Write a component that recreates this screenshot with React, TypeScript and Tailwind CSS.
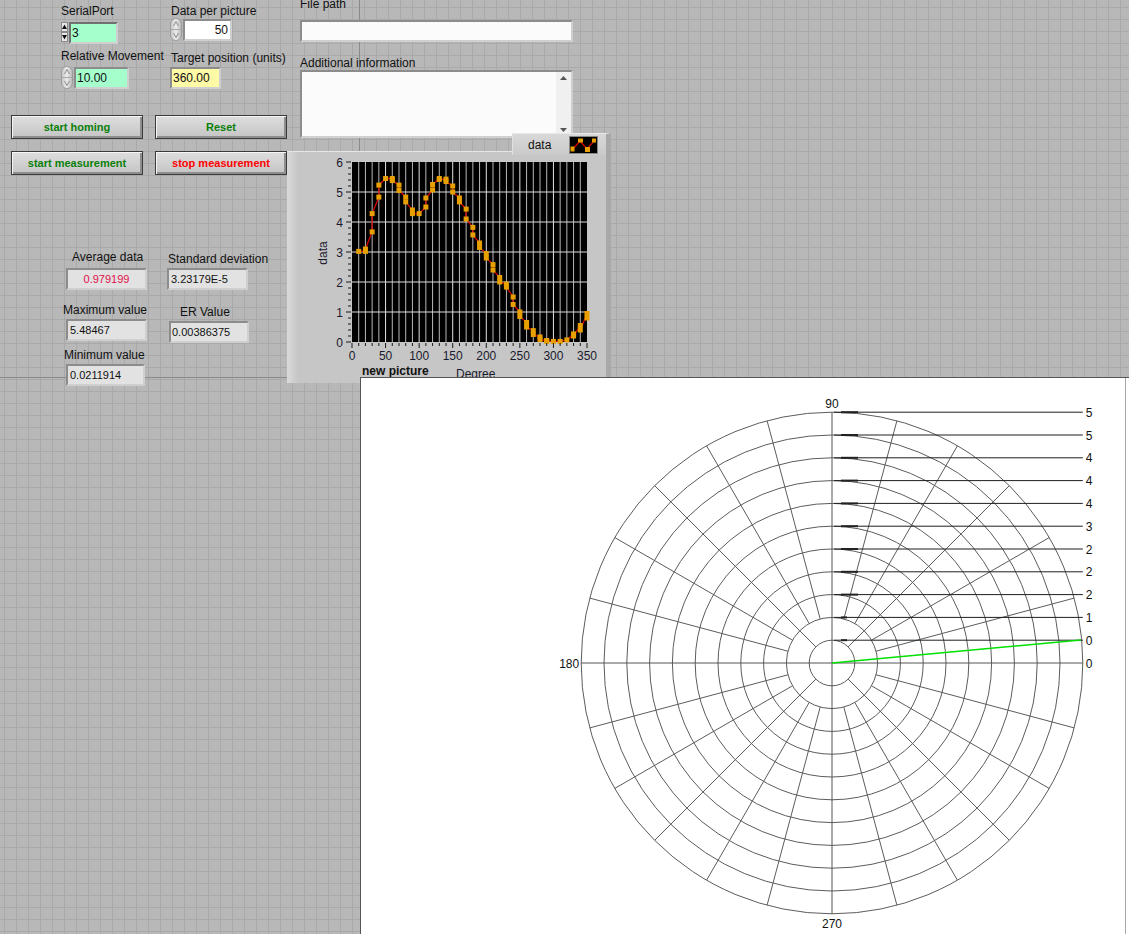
import React from "react";

const pts: [number, number[]][] = [
  [10, [3.02]], [20, [3.02, 3.1]], [30, [3.67, 4.28]], [40, [4.83, 5.23]], [50, [5.45]],
  [60, [5.45, 5.38]], [70, [5.23, 5.05]], [80, [4.83, 4.67]], [90, [4.4, 4.28]], [100, [4.28]],
  [110, [4.5, 4.8]], [120, [5.07, 5.25]], [130, [5.45, 5.42]], [140, [5.43, 5.35]], [150, [5.2, 5.0]],
  [160, [4.8, 4.67]], [170, [4.43, 4.1]], [180, [3.82, 3.57]], [190, [3.3, 3.15]], [200, [2.95, 2.8]],
  [210, [2.58, 2.4]], [220, [2.15, 2.0]], [230, [1.93, 1.83]], [240, [1.5, 1.25]], [250, [1.0, 0.85]],
  [260, [0.65, 0.5]], [270, [0.38, 0.25]], [280, [0.17, 0.08]], [290, [0.05, 0.02]], [300, [0.02]],
  [310, [0.02]], [320, [0.07]], [330, [0.27, 0.2]], [340, [0.55, 0.4]], [350, [0.95, 0.8]],
];

const FONT = "Liberation Sans, Arial, sans-serif";

function XYChart() {
  const px = (d: number) => 65 + (d * 235) / 350;
  const py = (v: number) => 190 - v * 30;
  const flat: [number, number][] = [];
  pts.forEach(([d, ys]) => ys.forEach((v) => flat.push([px(d), py(v)])));
  const path = flat.map(([x, y], i) => `${i ? "L" : "M"}${x.toFixed(1)} ${y.toFixed(1)}`).join(" ");
  const vgrid: number[] = [];
  for (let d = 10; d < 350; d += 10) vgrid.push(d);
  const yMinor: number[] = [];
  for (let i = 0; i <= 30; i++) yMinor.push(i / 5);
  const xMinor: number[] = [];
  for (let d = 0; d <= 350; d += 10) xMinor.push(d);
  return (
    <svg width="319" height="232" className="block" fontFamily={FONT}>
      <rect x="65" y="10" width="235" height="180" fill="#000" />
      {vgrid.map((d) => (
        <line key={d} x1={px(d)} x2={px(d)} y1="10" y2="190" stroke={d % 50 === 0 ? "#e4e4e4" : "#b8b8b8"} strokeWidth="1" />
      ))}
      {[1, 2, 3, 4, 5].map((v) => (
        <line key={v} x1="65" x2="300" y1={py(v)} y2={py(v)} stroke="#dcdcdc" strokeWidth="1" />
      ))}
      <path d={path} stroke="#d40000" strokeWidth="1.3" fill="none" />
      {flat.map(([x, y], i) => (
        <rect key={i} x={x - 2.5} y={y - 2.5} width="5" height="5" fill="#e8a000" />
      ))}
      {yMinor.map((v, i) => (
        <line key={i} x1={i % 5 === 0 ? 59 : 61} x2="64" y1={py(v)} y2={py(v)} stroke="#1a1a1a" strokeWidth="1" />
      ))}
      {[0, 1, 2, 3, 4, 5, 6].map((v) => (
        <text key={v} x="56" y={py(v) + 4.5} fontSize="12" textAnchor="end" fill="#1a1a2e">{v}</text>
      ))}
      {xMinor.map((d) => (
        <line key={d} x1={px(d)} x2={px(d)} y1="191" y2={d % 50 === 0 ? 196 : 194} stroke="#1a1a1a" strokeWidth="1" />
      ))}
      {[0, 50, 100, 150, 200, 250, 300, 350].map((d) => (
        <text key={d} x={px(d)} y="208" fontSize="12" textAnchor="middle" fill="#1a1a2e">{d}</text>
      ))}
      <text x="40" y="101" fontSize="12" textAnchor="middle" fill="#1a1a2e" transform="rotate(-90 40 101)">data</text>
      <text x="75" y="223" fontSize="12" fontWeight="bold" fill="#111">new picture</text>
      <text x="169" y="226" fontSize="12" fill="#1a1a2e">Degree</text>
    </svg>
  );
}

function PolarPlot() {
  const cx = 471;
  const cy = 285;
  const step = 22.8;
  const R = step * 11;
  const rings = Array.from({ length: 11 }, (_, i) => (i + 1) * step);
  const spokes: number[] = [];
  for (let a = 15; a < 360; a += 15) if (a % 90 !== 0) spokes.push(a);
  const labels = [0, 0, 1, 2, 2, 2, 3, 4, 4, 4, 5, 5];
  return (
    <svg width="768" height="556" className="block" fontFamily={FONT}>
      {rings.map((r, i) => (
        <circle key={i} cx={cx} cy={cy} r={r} fill="none" stroke="#5c5c5c" strokeWidth="1" />
      ))}
      {spokes.map((a) => {
        const r0 = a % 45 === 0 ? step : 2 * step;
        const rad = (a * Math.PI) / 180;
        return (
          <line key={a} x1={cx + r0 * Math.cos(rad)} y1={cy - r0 * Math.sin(rad)} x2={cx + R * Math.cos(rad)} y2={cy - R * Math.sin(rad)} stroke="#5c5c5c" strokeWidth="1" />
        );
      })}
      <line x1={cx - R} x2={cx + R} y1={cy} y2={cy} stroke="#555" strokeWidth="1" />
      <line x1={cx} x2={cx} y1={cy - R} y2={cy + R} stroke="#555" strokeWidth="1" />
      {labels.map((l, k) => (
        <g key={k}>
          {k > 0 && <line x1={cx + 2} x2={cx + R} y1={cy - k * step} y2={cy - k * step} stroke="#1e1e1e" strokeWidth="1" />}
          {k > 0 && <line x1={cx + 9} x2={cx + (k > 2 ? 26 : 15)} y1={cy - k * step} y2={cy - k * step} stroke="#222" strokeWidth="2" />}
          <text x={cx + R + 3} y={cy - k * step + 4.5} fontSize="12" fill="#111">{l}</text>
        </g>
      ))}
      <line x1={cx} y1={cy} x2={cx + 249} y2={cy - 23} stroke="#00e000" strokeWidth="1.5" />
      <text x={cx} y={cy - R - 4} fontSize="12" textAnchor="middle" fill="#111">90</text>
      <text x={cx - R - 2} y={cy + 4.5} fontSize="12" textAnchor="end" fill="#111">180</text>
      <text x={cx} y={cy + R + 14} fontSize="12" textAnchor="middle" fill="#111">270</text>
      <line x1="764.5" x2="764.5" y1="0" y2="556" stroke="#a8a8a8" strokeWidth="1" />
    </svg>
  );
}

function UpDown() {
  return (
    <svg width="7" height="20" viewBox="0 0 7 20">
      <rect x="0" y="0" width="7" height="20" fill="#d8d8d8" />
      <rect x="0.5" y="0.5" width="6" height="9" fill="#e8e8e8" stroke="#8a8a8a" />
      <rect x="0.5" y="10.5" width="6" height="9" fill="#e8e8e8" stroke="#8a8a8a" />
      <polygon points="3.5,2.5 6,7 1,7" fill="#111" />
      <polygon points="3.5,17.5 6,13 1,13" fill="#111" />
    </svg>
  );
}

function Pill() {
  return (
    <svg width="12" height="23" viewBox="0 0 12 23" className="shrink-0">
      <defs>
        <linearGradient id="pg" x1="0" x2="1" y1="0" y2="0">
          <stop offset="0" stopColor="#c4c4c4" />
          <stop offset="0.5" stopColor="#ececec" />
          <stop offset="1" stopColor="#b4b4b4" />
        </linearGradient>
      </defs>
      <rect x="0.5" y="0.5" width="11" height="22" rx="5.5" fill="url(#pg)" stroke="#9c9c9c" />
      <line x1="1" x2="11" y1="11.5" y2="11.5" stroke="#a8a8a8" />
      <polyline points="3.5,8 6,3.5 8.5,8" fill="none" stroke="#8c8c8c" strokeWidth="1" />
      <polyline points="3.5,15 6,19.5 8.5,15" fill="none" stroke="#8c8c8c" strokeWidth="1" />
    </svg>
  );
}

const btn =
  "h-[24px] border border-[#3a3a3a] bg-[linear-gradient(#dedede,#c4c4c4)] text-[11px] font-bold shadow-[inset_1px_1px_0_#f6f6f6,inset_-2px_-2px_0_#8e8e8e]";
const field =
  "flex shrink-0 h-[22px] items-center border-2 border-t-[#8c8c8c] border-l-[#8c8c8c] border-b-[#cfcfcf] border-r-[#cfcfcf]";

export default function App() {
  return (
    <div className="relative w-[1129px] h-[934px] overflow-hidden bg-[#b8b8b8] [background-image:linear-gradient(to_right,#a9a9a9_1px,transparent_1px),linear-gradient(to_bottom,#a9a9a9_1px,transparent_1px)] [background-size:12px_12px] [background-position:4px_7px] font-['Liberation_Sans',Arial,sans-serif] text-[#111]">
      {/* major grid lines */}
      <div className="absolute left-[359px] top-0 h-[378px] w-px bg-[#8a8a8a]" />
      <div className="absolute left-0 top-[377px] h-px w-[360px] bg-[#8a8a8a]" />

      {/* numeric controls */}
      <div className="absolute left-[61px] top-[4px] flex text-[12px] leading-[14px]">
        <div className="flex w-[109px] flex-col">
          <span className="whitespace-nowrap">SerialPort</span>
          <div className="mt-[4px] flex h-[21px]">
            <UpDown />
            <div className={`${field} ml-px h-[21px] w-[49px] border-t-[#707070] border-l-[#707070] bg-[#a4ffcc] pl-[1px]`}>3</div>
          </div>
          <span className="mt-[6px] whitespace-nowrap">Relative Movement</span>
          <div className="mt-[3px] flex items-center gap-px">
            <Pill />
            <div className={`${field} h-[21px] w-[55px] bg-[#a4ffcc] pl-[1px]`}>10.00</div>
          </div>
        </div>
        <div className="flex flex-col">
          <span className="pl-px whitespace-nowrap">Data per picture</span>
          <div className="flex items-center gap-px">
            <Pill />
            <div className={`${field} w-[49px] justify-end bg-white pr-[2px]`}>50</div>
          </div>
          <span className="mt-[10px] pl-px whitespace-nowrap">Target position (units)</span>
          <div className={`${field} mt-[2px] w-[51px] bg-[#fffaa6] pl-[1px]`}>360.00</div>
        </div>
      </div>

      {/* file path + additional information */}
      <div className="absolute left-[300px] top-[-3px] flex w-[273px] flex-col text-[12px] leading-[14px]">
        <span>File path</span>
        <div className={`${field} mt-[9px] h-[21px] bg-[#fbfbfb]`} />
        <span className="mt-[14px]">Additional information</span>
        <div className={`${field} h-[68px] items-stretch bg-[#fbfbfb]`}>
          <div className="flex-1" />
          <div className="flex w-[15px] flex-col items-center justify-between bg-[#f0f0f0] py-[4px]">
            <svg width="7" height="4"><polygon points="3.5,0 7,4 0,4" fill="#555" /></svg>
            <svg width="7" height="4"><polygon points="0,0 7,0 3.5,4" fill="#555" /></svg>
          </div>
        </div>
      </div>

      {/* Buttons */}
      <div className="absolute left-[11px] top-[115px] grid grid-cols-[132px_132px] gap-[12px]">
        <button className={`${btn} text-[#0a800a]`}>start homing</button>
        <button className={`${btn} text-[#0a800a]`}>Reset</button>
        <button className={`${btn} text-[#0a800a]`}>start measurement</button>
        <button className={`${btn} text-[#ff0000]`}>stop measurement</button>
      </div>

      {/* Stats */}
      <div className="absolute left-[63px] top-[250px] flex gap-[19px] text-[12px] leading-[14px]">
        <div className="flex w-[85px] flex-col">
          <span className="pl-[9px]">Average data</span>
          <div className={`${field} mt-[4px] ml-[3px] w-[81px] justify-center bg-[#e2e2e2] text-[11px] text-[#e0104a]`}>0.979199</div>
          <span className="mt-[13px] whitespace-nowrap">Maximum value</span>
          <div className={`${field} mt-[2px] ml-[3px] w-[81px] bg-[#e2e2e2] pl-[2px] text-[11px]`}>5.48467</div>
          <span className="mt-[7px] ml-px whitespace-nowrap">Minimum value</span>
          <div className={`${field} mt-[2px] ml-[3px] w-[79px] bg-[#e2e2e2] pl-[2px] text-[11px]`}>0.0211914</div>
        </div>
        <div className="flex flex-col">
          <span className="mt-[2px] ml-px whitespace-nowrap">Standard deviation</span>
          <div className={`${field} mt-[2px] w-[81px] bg-[#e2e2e2] pl-[2px] text-[11px]`}>3.23179E-5</div>
          <span className="mt-[15px] ml-[13px]">ER Value</span>
          <div className={`${field} mt-[2px] ml-[2px] w-[80px] bg-[#e2e2e2] pl-[1px] text-[11px]`}>0.00386375</div>
        </div>
      </div>

      {/* XY chart */}
      <div className="absolute left-[287px] top-[133px] flex w-[324px] flex-col items-end">
        <div className="relative z-10 flex h-[22px] w-[99px] items-center border-t border-l border-t-[#e8e8e8] border-l-[#e0e0e0] border-r-[5px] border-r-[#a8a8a8] bg-[linear-gradient(#d8d8d8,#cacaca)] pl-[15px] text-[12px]">
          <span className="w-[41px]">data</span>
          <div className="h-[18px] w-[29px] border border-[#888] bg-black">
            <svg width="27" height="16" viewBox="0 0 27 16" className="block">
              <polyline points="3,12 10,4 17,12 24,4" fill="none" stroke="#d40000" strokeWidth="1.2" />
              <rect x="0.5" y="9.5" width="4" height="5" fill="#e8a000" />
              <rect x="8" y="1.5" width="5" height="4" fill="#e8a000" />
              <rect x="15" y="10" width="5" height="5" fill="#e8a000" />
              <rect x="22" y="1.5" width="4" height="4" fill="#e8a000" />
            </svg>
          </div>
        </div>
        <div className="-mt-[4px] h-[232px] w-[324px] border-t border-t-[#e6e6e6] border-r-[5px] border-r-[#a8a8a8] bg-[linear-gradient(to_right,#dadada_0px,#c6c6c6_11px,#c6c6c6_100%)]">
          <XYChart />
        </div>
      </div>

      {/* Polar plot */}
      <div className="absolute left-[360px] top-[377px] h-[557px] w-[769px] border-t border-l border-[#555] bg-white">
        <PolarPlot />
      </div>
    </div>
  );
}
